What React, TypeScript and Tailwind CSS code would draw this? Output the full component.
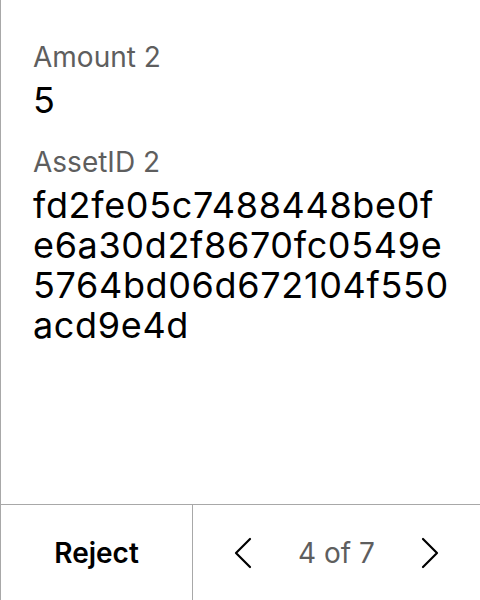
import React from 'react';

function Field({ label, value }: { label: string; value: string }) {
  return (
    <div className="flex flex-col">
      <span className="text-[28px] leading-[36px] text-[#5e5e5e]">{label}</span>
      <span className="mt-[5px] text-[36px] leading-[40px] tracking-[0.65px] text-black break-all">{value}</span>
    </div>
  );
}

function Chevron({ dir }: { dir: 'left' | 'right' }) {
  return (
    <svg width="18" height="32" viewBox="0 0 18 32" fill="none" stroke="black" strokeWidth="2.2" strokeLinecap="round" strokeLinejoin="round">
      {dir === 'left' ? <path d="M16 2 L2 16 L16 30" /> : <path d="M2 2 L16 16 L2 30" />}
    </svg>
  );
}

export default function App() {
  return (
    <div className="w-[480px] h-[600px] bg-white border-l border-[#a8a8a8] flex flex-col font-['Inter',sans-serif]">
      <div className="flex-1 flex flex-col gap-[24px] pl-[32px] pr-[30px] pt-[39px]">
        <Field label="Amount 2" value="5" />
        <Field label="AssetID 2" value="fd2fe05c7488448be0fe6a30d2f8670fc0549e5764bd06d672104f550acd9e4d" />
      </div>
      <div className="h-[96px] flex border-t border-[#a8a8a8]">
        <button className="w-[192px] border-r border-[#a8a8a8] text-[28px] font-semibold text-black">Reject</button>
        <div className="flex-1 flex items-center justify-center gap-[46px]">
          <Chevron dir="left" />
          <span className="text-[28px] text-[#5e5e5e]">4 of 7</span>
          <Chevron dir="right" />
        </div>
      </div>
    </div>
  );
}
